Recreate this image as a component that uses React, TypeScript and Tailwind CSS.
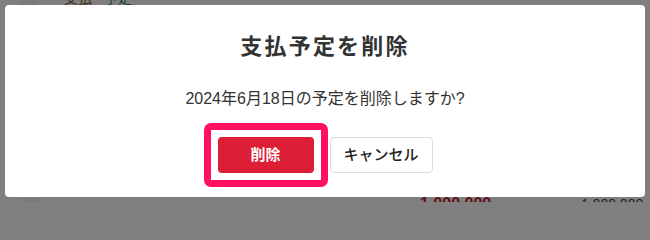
import React from 'react';

const jp = "font-['Liberation_Sans','Noto_Sans_CJK_JP',sans-serif]";

const DeleteScheduleDialog: React.FC = () => {
  return (
    <div className="min-h-screen bg-[#808080]">
      <div className={`relative w-[650px] h-[202px] overflow-hidden bg-white ${jp}`}>
        {/* 背景のページ（オーバーレイの下） */}
        <div className="flex h-[202px] overflow-hidden">
          <div className="ml-[22px] w-[16px] h-full bg-[#f3f5fb]" />
          <div className="flex-1 flex flex-col justify-between overflow-hidden">
            <div className="flex h-[5px] items-end overflow-hidden gap-[12px] pl-[26px] text-[14px] leading-[14px]">
              <span className="text-[#7a5a2a]">支払</span>
              <span className="text-[#2a8a8a]">予定</span>
            </div>
            <div className="flex h-[6px] items-start overflow-hidden text-[16px] leading-[16px]">
              <span className="ml-[382px] font-bold text-[#c0282e]">1,000,000円</span>
              <span className="ml-[82px] text-[14px] leading-[16px] text-[#444]">1,000,000円</span>
            </div>
          </div>
        </div>

        {/* モーダル */}
        <div className="absolute inset-0 z-10 bg-black/50 p-[5px]">
          <div className="h-full bg-white rounded-[4px] flex flex-col items-center pt-[25px]">
            <h2 className="text-[22px] leading-[33px] font-bold tracking-[0.1em] text-[#333]">
              支払予定を削除
            </h2>
            <p className="mt-[24px] text-[16px] leading-[24px] text-[#333]">
              2024年6月18日の予定を削除しますか?
            </p>
            <div className="mt-[26px] flex gap-[16px]">
              <div className="relative">
                <button className="w-[96px] h-[36px] rounded-[4px] bg-[#dc1f34] text-white text-[15px] font-bold">
                  削除
                </button>
                <span className="pointer-events-none absolute -inset-[14px] rounded-[7px] border-[7px] border-[#ff1060]" />
              </div>
              <button className="w-[103px] h-[36px] rounded-[4px] border border-[#dcdcdc] bg-white text-[15px] font-medium text-[#222]">
                キャンセル
              </button>
            </div>
          </div>
        </div>
      </div>
    </div>
  );
};

export default function App() {
  return <DeleteScheduleDialog />;
}
